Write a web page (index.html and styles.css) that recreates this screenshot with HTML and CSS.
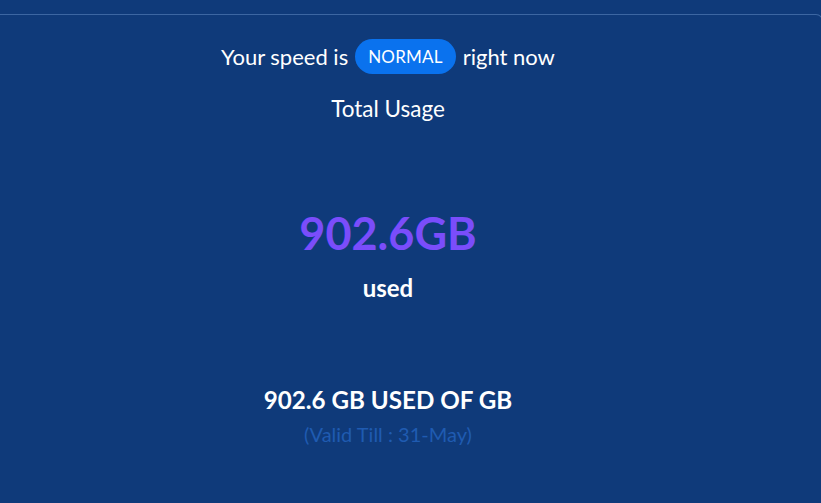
FILE: index.html
```html
<!DOCTYPE html>
<html>
<head>
<meta charset="utf-8">
<link rel="stylesheet" href="styles.css">
</head>
<body>
<div class="card">
  <div class="content">
    <div class="speed">
      <span>Your speed is</span>
      <span class="badge">NORMAL</span>
      <span>right now</span>
    </div>
    <div class="title">Total Usage</div>
    <div class="usage">
      <div class="amount">902.6GB</div>
      <div class="used">used</div>
    </div>
    <div class="summary">902.6 GB USED OF GB</div>
    <div class="valid">(Valid Till : 31-May)</div>
  </div>
</div>
</body>
</html>
```
FILE: styles.css
```css
html, body {
  margin: 0;
  padding: 0;
  background: #0f3a7a;
  height: 100%;
  overflow: hidden;
}
body {
  font-family: Lato, "Open Sans", sans-serif;
  color: #ffffff;
}
.card {
  margin-top: 14px;
  width: 823px;
  height: 600px;
  border-top: 1px solid #3c66a2;
  border-right: 1px solid #3c66a2;
  border-top-right-radius: 7px;
  box-sizing: border-box;
}
.content {
  width: 776px;
  display: flex;
  flex-direction: column;
  align-items: center;
  text-align: center;
  padding-top: 24px;
}
.speed {
  display: flex;
  align-items: center;
  gap: 7px;
  font-size: 22px;
  line-height: 35px;
}
.badge {
  background: #0a72ee;
  border-radius: 18px;
  height: 35px;
  padding: 0 13px;
  font-size: 17px;
  line-height: 35px;
  letter-spacing: 0.2px;
}
.title {
  margin-top: 22px;
  font-size: 22.5px;
  line-height: 26px;
}
.usage {
  margin-top: 85px;
  display: flex;
  flex-direction: column;
  align-items: center;
}
.amount {
  font-size: 45px;
  font-weight: 700;
  color: #7a4dfb;
  line-height: 52px;
}
.used {
  margin-top: 14px;
  font-size: 24px;
  font-weight: 700;
  line-height: 30px;
}
.summary {
  margin-top: 82px;
  font-size: 24.2px;
  font-weight: 700;
  line-height: 30px;
}
.valid {
  margin-top: 6px;
  font-size: 20px;
  line-height: 26px;
  color: #1f5bb1;
}
```
